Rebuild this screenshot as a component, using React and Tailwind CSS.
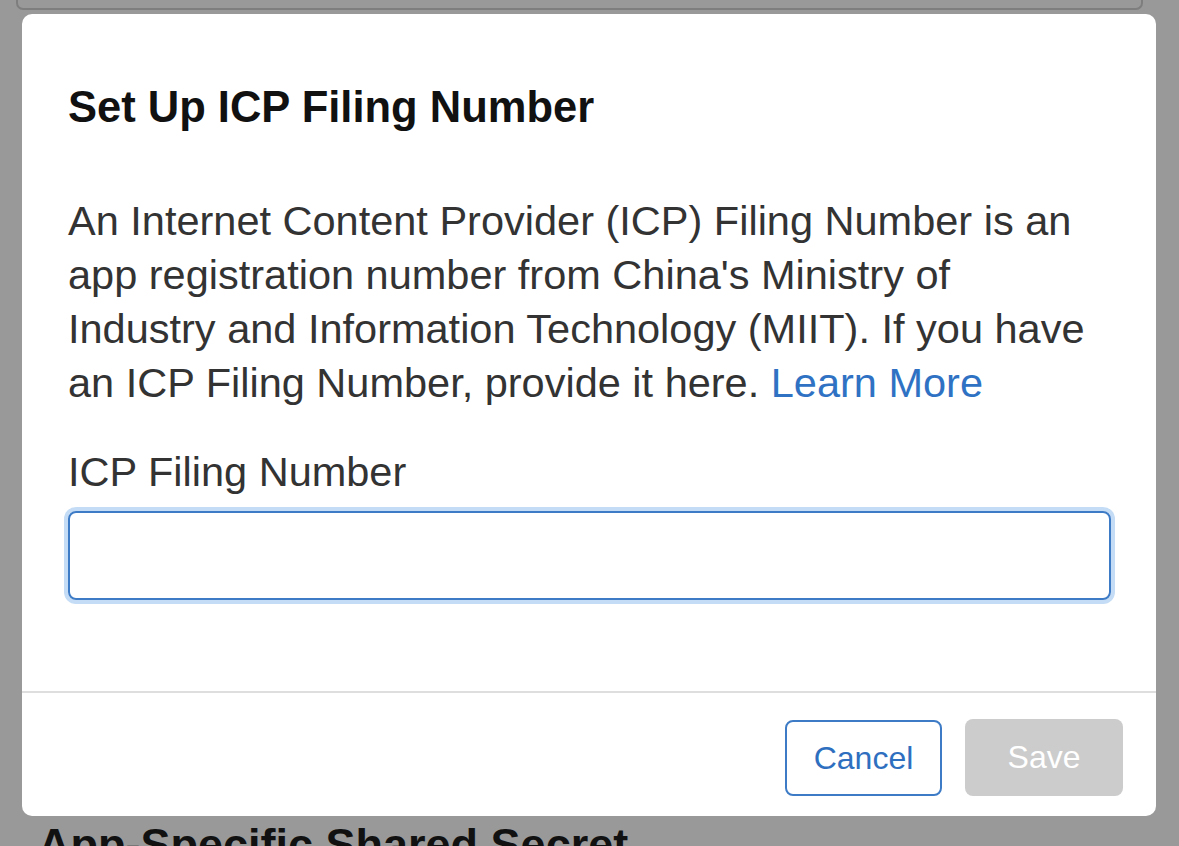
import React from 'react';

const font = { fontFamily: '"Liberation Sans", Arial, sans-serif' };

export default function App() {
  return (
    <div className="h-[846px] w-[1179px] overflow-hidden bg-[#999999]" style={font}>
      {/* page behind the overlay */}
      <div className="mx-[16px] w-[1127px] h-[10px] rounded-b-[7px] border-x-2 border-b-2 border-[#7e7e7e]" />

      {/* dialog */}
      <div className="mt-[4px] ml-[22px] w-[1134px] rounded-[10px] bg-white">
        <div className="px-[46px] pt-[68px]">
          <h2 className="text-[43.5px] leading-[1.15] font-bold text-[#111111]">
            Set Up ICP Filing Number
          </h2>
          <p className="mt-[62px] text-[41.5px] leading-[54px] text-[#333333] whitespace-nowrap">
            An Internet Content Provider (ICP) Filing Number is an<br />
            app registration number from China's Ministry of<br />
            Industry and Information Technology (MIIT). If you have<br />
            an ICP Filing Number, provide it here.{' '}
            <a className="text-[#2f72c4]">Learn More</a>
          </p>
          <label className="block mt-[38px] text-[41.5px] leading-[1.15] text-[#333333]">
            ICP Filing Number
          </label>
          <input
            type="text"
            className="mt-[15px] block w-[1043px] h-[89px] rounded-[8px] border-2 border-[#3d7bc6] ring-4 ring-[#c4dcf5] outline-none px-4 text-[36px]"
          />
        </div>
        <div className="mt-[91px] h-[2px] bg-[#dedede]" />
        <div className="flex justify-end items-start gap-[23px] pt-[26px] pb-[20px] pr-[33px]">
          <button className="mt-[1px] w-[157px] h-[76px] rounded-[8px] border-2 border-[#3d7bc6] bg-white text-[32px] text-[#2f6fbf]">
            Cancel
          </button>
          <button className="w-[158px] h-[77px] rounded-[8px] bg-[#cccccc] text-[32px] text-white">
            Save
          </button>
        </div>
      </div>

      <h3 className="mt-[3px] ml-[38px] text-[45px] leading-[1.15] font-bold text-[#111111]">
        App-Specific Shared Secret
      </h3>
    </div>
  );
}
